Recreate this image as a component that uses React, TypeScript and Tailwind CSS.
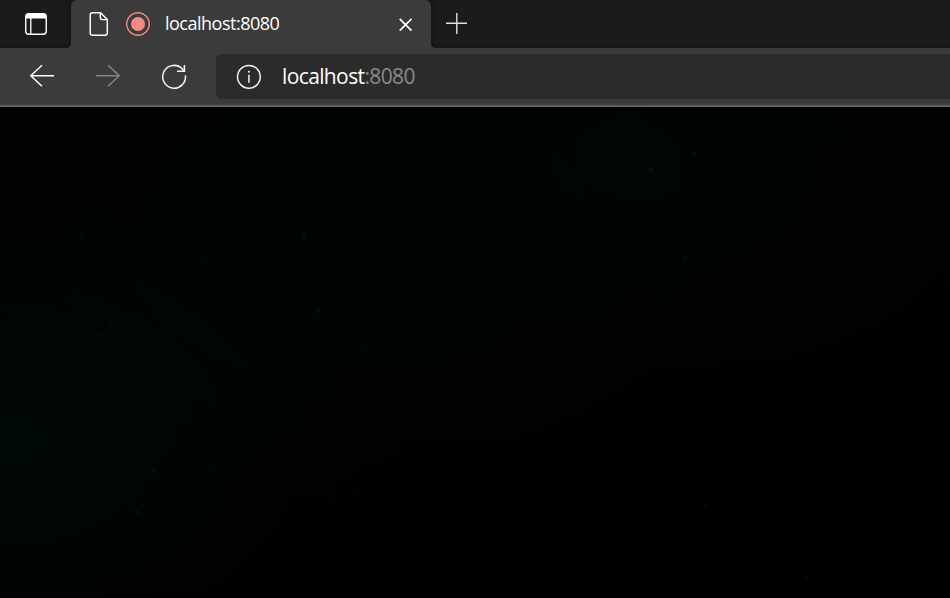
const glows = [
  "radial-gradient(ellipse 400px 270px at 0px 330px, #000b06cc 0%, #000804b3 40%, transparent 100%)",
  "radial-gradient(ellipse 360px 240px at 640px 50px, #000703cc 0%, #000502b3 50%, transparent 100%)",
  "radial-gradient(ellipse 400px 260px at 350px 130px, #000502 0%, #000402 50%, transparent 100%)",
  "linear-gradient(#010202, #000000 85%)",
].join(", ");

const specks: [number, number, string][] = [
  [81, 235, "#091009"], [304, 235, "#0b120c"], [201, 262, "#060b0a"],
  [318, 311, "#0a110b"], [110, 325, "#0a120c"], [99, 335, "#07100a"],
  [367, 347, "#080b0a"], [375, 356, "#070908"], [153, 471, "#061008"],
  [213, 467, "#060a08"], [334, 496, "#090806"], [357, 491, "#090707"],
  [380, 453, "#090505"], [116, 573, "#070a08"], [651, 170, "#0b150d"],
  [694, 154, "#07100a"], [685, 258, "#08110a"], [835, 239, "#070b09"],
  [662, 293, "#050b06"], [705, 506, "#0a0a0a"], [827, 447, "#070707"],
  [892, 479, "#050505"], [759, 574, "#060606"], [806, 577, "#080808"],
  [137, 512, "#05120c"],
];

function TabStrip() {
  return (
    <div className="flex h-12 bg-[#3b3b3b]">
      <div className="flex w-[71px] shrink-0 rounded-br-[5px] bg-[#1b1b1b] shadow-[inset_-3px_-2px_3px_-1px_#151515]">
        <svg width="71" height="48" fill="none" stroke="#fff" strokeWidth="1.4">
          <rect x="25.75" y="13.75" width="20.5" height="20.5" rx="3" />
          <path d="M26 18.5V16.5Q26 14 28.5 14h15Q46 14 46 16.5v2Z" fill="#fff" stroke="none" />
          <path d="M30.8 18v16" strokeWidth="1.3" />
        </svg>
      </div>
      <div className="bg-[#1b1b1b]">
        <div className="flex h-12 w-[360px] items-center rounded-t-[6px] bg-[#3b3b3b] pl-[18px]">
          <svg className="mr-[17px]" width="20" height="26" viewBox="0 0 20 26" fill="none" stroke="#fff" strokeWidth="1.45">
            <path d="M3.5 1.7h8l6.8 6.8V22q0 2.3-2.3 2.3H3.5q-2.3 0-2.3-2.3V4q0-2.3 2.3-2.3Z" />
            <path d="M11.3 1.8v4.8q0 2 2 2h5" />
          </svg>
          <svg className="mr-[15px]" width="24" height="24" fill="none">
            <circle cx="12" cy="12" r="11.3" stroke="#f28b82" strokeWidth="1.45" />
            <circle cx="12" cy="12" r="7" fill="#f28b82" />
          </svg>
          <span className="mb-[2px] w-[233px] whitespace-nowrap font-['Open_Sans','Noto_Sans',sans-serif] text-[18px] leading-6 tracking-[-0.5px] text-white">
            localhost:8080
          </span>
          <svg width="16" height="16" fill="none" stroke="#fff" strokeWidth="1.65">
            <path d="m1.7 2.9 11.8 11.8M13.5 2.9 1.7 14.7" />
          </svg>
        </div>
      </div>
      <div className="flex flex-1 rounded-bl-[5px] bg-[#1b1b1b] shadow-[inset_3px_-2px_3px_-1px_#151515]">
        <svg width="60" height="48" fill="none" stroke="#dedede" strokeWidth="1.4">
          <path d="M15 23.3h21M25.8 13v21" />
        </svg>
      </div>
    </div>
  );
}

function Toolbar() {
  return (
    <div className="flex h-[59px] items-start border-b-2 border-[#606060] bg-[#3b3b3b] pt-[6px]">
      <svg className="shrink-0" width="66" height="45" fill="none" stroke="#fff" strokeWidth="1.5">
        <path d="M54 21.8H31M42 11.2 30.8 21.8 42 32.2" />
      </svg>
      <svg className="shrink-0" width="66" height="45" fill="none" stroke="#858585" strokeWidth="1.5">
        <path d="M30 21.8h23M42 11.2l11.2 10.6L42 32.2" />
      </svg>
      <svg className="shrink-0" width="84" height="45" fill="none" stroke="#f2f2f2" strokeWidth="1.55">
        <path d="M53.4 21.3A11.4 11.4 0 1 1 50.6 15.2L52 16.8" />
        <path d="M52.4 11v6.2H45" />
      </svg>
      <div className="flex h-[45px] flex-1 items-center rounded-l-[6px] bg-[#2b2b2b] pl-5">
        <svg className="mr-[20px] shrink-0" width="26" height="26" fill="none" stroke="#f2f2f2">
          <circle cx="12.9" cy="12.8" r="11.4" strokeWidth="1.5" />
          <path d="M12.9 10.8v8" strokeWidth="1.5" />
          <circle cx="12.9" cy="7.8" r="1" fill="#f2f2f2" stroke="none" />
        </svg>
        <span className="mb-[2px] whitespace-nowrap font-['Open_Sans','Noto_Sans',sans-serif] text-[21px] leading-7 tracking-[-0.62px] text-white">
          localhost<span className="text-[#898989]">:8080</span>
        </span>
      </div>
    </div>
  );
}

export default function App() {
  return (
    <div className="flex h-[598px] w-[950px] flex-col overflow-hidden bg-black">
      <TabStrip />
      <Toolbar />
      <main className="flex-1" style={{ background: glows }}>
        <svg className="block" width="950" height="491" viewBox="0 107 950 491">
          {specks.map(([x, y, color]) => (
            <g key={`${x}-${y}`} fill={color}>
              <circle cx={x} cy={y} r="3" opacity="0.35" />
              <circle cx={x} cy={y} r="1.7" opacity="0.7" />
            </g>
          ))}
          <path d="M0 597h950" stroke="#000" strokeWidth="2" />
        </svg>
      </main>
    </div>
  );
}
